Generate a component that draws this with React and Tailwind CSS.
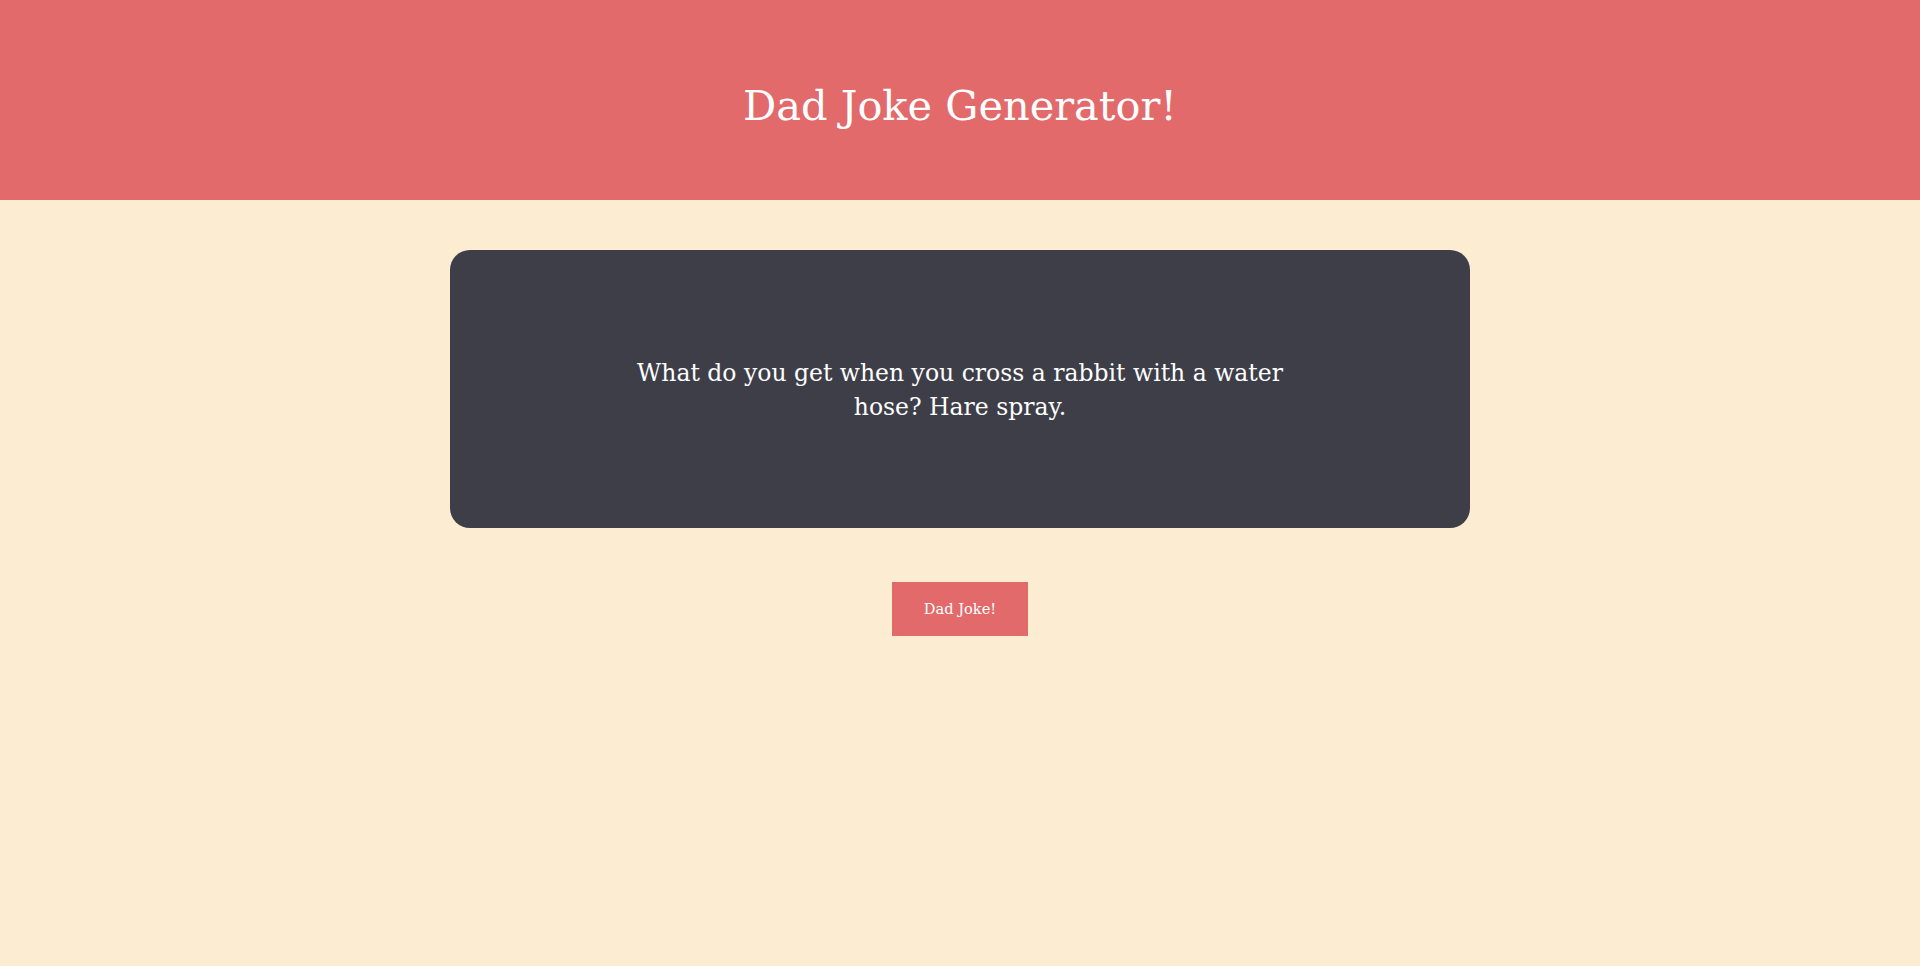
export default function App() {
  return (
    <div className="min-h-[966px] bg-[#fcedd2] font-['DejaVu_Serif',serif] text-white">
      <header className="h-[200px] bg-[#e26a6a] flex items-center justify-center">
        <h1 className="text-[41.5px] leading-none pt-[12px]">Dad Joke Generator!</h1>
      </header>
      <main className="flex flex-col items-center">
        <div className="mt-[50px] w-[1020px] h-[278px] rounded-[20px] bg-[#3e3e49] flex items-center justify-center">
          <p className="max-w-[670px] text-center text-[23.5px] leading-[34px] pt-[2px]">
            What do you get when you cross a rabbit with a water hose? Hare spray.
          </p>
        </div>
        <button className="mt-[54px] w-[136px] h-[54px] bg-[#e26a6a] text-[14.6px] text-white">
          Dad Joke!
        </button>
      </main>
    </div>
  );
}
